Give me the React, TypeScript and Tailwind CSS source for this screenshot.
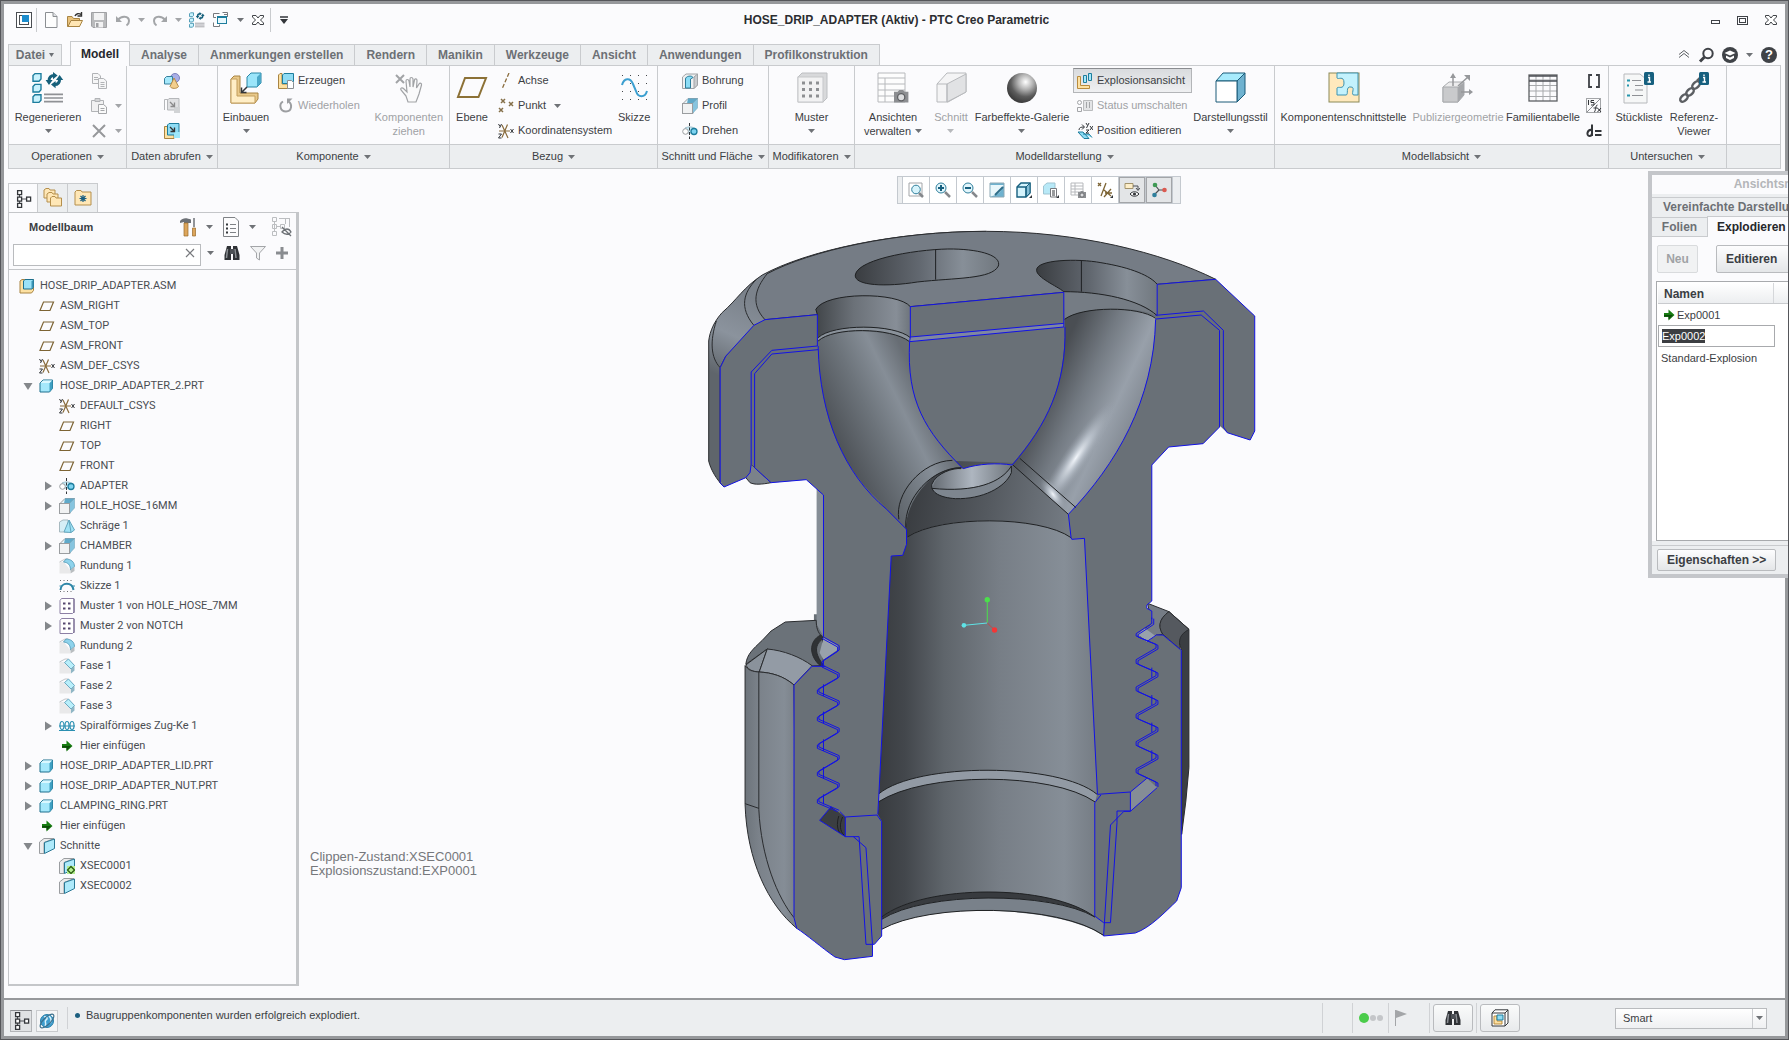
import React from 'react';

type IconProps = { children?: React.ReactNode; size?: number; box?: number };

const Svg = ({ children, size = 16, box = 16 }: IconProps) => (
  <svg
    width={size}
    height={size}
    viewBox={`0 0 ${box} ${box}`}
    fill="none"
    className="shrink-0"
    aria-hidden="true"
  >
    {children}
  </svg>
);

const Caret = ({ color = '#6f7276' }: { color?: string }) => (
  <svg width="7" height="4" viewBox="0 0 7 4" className="shrink-0" aria-hidden="true">
    <path d="M0 0H7L3.5 4Z" fill={color} />
  </svg>
);

/* ---------- small icons (16px) ---------- */

const AppIcon = () => (
  <Svg>
    <rect x="0.5" y="0.5" width="15" height="15" fill="#fff" stroke="#4a4d52" />
    <rect x="3.5" y="3.5" width="9" height="9" stroke="#4a4d52" />
    <rect x="6" y="3" width="7" height="7" fill="#1c8ccc" />
  </Svg>
);

const NewIcon = () => (
  <Svg>
    <path d="M2.5 0.5H10L14 4.5V15.5H2.5Z" fill="#fdfdfd" stroke="#8b8e92" />
    <path d="M10 0.5V4.5H14" stroke="#8b8e92" fill="#dfe1e4" />
  </Svg>
);

const OpenIcon = () => (
  <Svg>
    <path d="M0.5 14.5V4.5H5L6.5 6.5H12.5V14.5Z" fill="#e9c27c" stroke="#a88443" />
    <path d="M1 14.5L4 8.5H15.5L12.5 14.5Z" fill="#ffe6b4" stroke="#a88443" />
    <path d="M8 4C9 1.500 12 1 14 2.500M14.500 0V4H10.500" stroke="#333" strokeWidth="1.400" />
  </Svg>
);

const SaveIcon = () => (
  <Svg>
    <path d="M0.500 0.500H15.500V15.500H2L0.500 14Z" fill="#b9babc" stroke="#a0a1a4" />
    <rect x="3" y="1" width="10" height="7" fill="#f2f2f3" />
    <rect x="4" y="10" width="8" height="5.500" fill="#f2f2f3" />
    <rect x="5" y="11" width="2.500" height="4" fill="#a0a1a4" />
  </Svg>
);

const UndoIcon = ({ flip }: { flip?: boolean }) => (
  <Svg>
    <g transform={flip ? 'matrix(-1 0 0 1 16 0)' : undefined}>
      <path d="M3 8C6 3.500 14 3.500 14 9C14 11 13 12.500 11.500 13.500" stroke="#a3a5a8" strokeWidth="2" />
      <path d="M1 4V10H7Z" fill="#a3a5a8" />
    </g>
  </Svg>
);

const regenArt = (
  <>
    <g fill="#c9f2fd" stroke="#1d7d9d" strokeWidth="0.700">
      <path d="M0.500 1.800L1.500 0.800H4.500V3.500L3.500 4.600H0.500Z" />
      <path d="M0.500 7.200L1.500 6.200H4.500V8.900L3.500 10H0.500Z" />
      <path d="M0.500 12.400L1.500 11.400H4.500V14.100L3.500 15.200H0.500Z" />
    </g>
    <path d="M6 11.200H15.500M6 13H15.500M6 14.800H15.500" stroke="#8f9195" strokeWidth="0.800" />
    <path d="M8.500 4.500C8.500 2.500 9.500 1.800 11 1.800M13.800 3.500C13.800 5.500 12.800 6.300 11.300 6.300" stroke="#16607b" strokeWidth="1.500" />
    <path d="M6.800 4H10.300L8.500 6.500ZM12 4H15.600L13.800 1.500Z" fill="#16607b" />
    <path d="M10.500 0L12.800 1.800L10.500 3.600ZM11.800 4.500L9.500 6.300L11.800 8.100Z" fill="#16607b" />
  </>
);

const WindowsIcon = () => (
  <Svg>
    <g fill="#fff" stroke="#77797d">
      <path d="M0.500 1.500H6.500M0.500 1.500V5.500H3M9.500 0.500H14.500V5M11 2.500H14M0.500 10.500V14.500H6.500V12.500" />
    </g>
    <rect x="4.500" y="4.500" width="9" height="7" fill="#e8f8fd" stroke="#1d7d9d" />
    <path d="M4.500 5.500H13.500" stroke="#1d7d9d" />
  </Svg>
);

const XOutline = ({ size = 12 }: { size?: number }) => (
  <Svg size={size} box={12}>
    <path
      d="M0.500 1.500H4L6 4L8 1.500H11.500V3L8.500 6L11.500 9V10.500H8L6 8L4 10.500H0.500V9L3.500 6L0.500 3Z"
      fill="#fff"
      stroke="#3f4247"
    />
  </Svg>
);

const CopyIcon = () => (
  <Svg>
    <g fill="#f6f6f7" stroke="#b1b3b6">
      <path d="M1.500 0.500H7L9.500 3V10.500H1.500Z" />
      <path d="M7.500 5.500H12.500L15.500 8V15.500H7.500Z" />
      <path d="M3 4.500H7M3 6.500H7M9.500 9.500H13.500M9.500 11.500H13.500M9.500 13.500H13.500" />
    </g>
  </Svg>
);

const PasteIcon = () => (
  <Svg>
    <path d="M0.500 2.500H12.500V13.500H0.500Z" fill="#f1f1f2" stroke="#b1b3b6" />
    <path d="M4 0.500H9V3.500H4Z" fill="#d3d4d6" stroke="#b1b3b6" />
    <path d="M7.500 6.500H12.500L15.500 9V15.500H7.500ZM9.500 10.500H13.500M9.500 12.500H13.500" fill="#fafafa" stroke="#a4a6a9" />
  </Svg>
);

const DeleteIcon = () => (
  <Svg>
    <path d="M2 2L14 14M14 2L2 14" stroke="#96989b" strokeWidth="2" />
  </Svg>
);

const ShapesIcon = () => (
  <Svg>
    <circle cx="11" cy="5" r="4.500" fill="#a9aee6" stroke="#7d82bd" />
    <path d="M0.500 5.500L2.500 3.500H8.500V9L6.500 11H0.500Z" fill="#a5e8fb" stroke="#38809d" />
    <path d="M10 5L14.500 13.500C13 16 7.500 16 6 13.500Z" fill="#f3cf8e" stroke="#b38b49" />
  </Svg>
);

const CopyGeomIcon = ({ color }: { color?: boolean }) => (
  <Svg>
    {color ? (
      <path d="M0.500 3.500H4V11.500H10V15.500H0.500Z" fill="#fde1a2" stroke="#a88443" />
    ) : (
      <path d="M0.500 12V1.500H5" stroke="#b5b7ba" />
    )}
    <path d="M3.500 2L5 0.500H15V10L12 12H3.500Z" fill={color ? '#8fdcf4' : '#e0e1e3'} stroke={color ? '#1d7d9d' : '#b5b7ba'} />
    <rect x="10" y="9" width="6" height="6" fill={color ? '#9ee8fb' : '#d1d3d5'} />
    <path d="M6 4L10 8M10.500 4.500V8.500H6.500" stroke="#333" strokeOpacity={color ? 1 : 0.5} strokeWidth="1.300" />
  </Svg>
);

const CreateIcon = () => (
  <Svg>
    <path d="M0.500 2L2 0.500H4V11H12V14L10.500 15.500H0.500Z" fill="#fde1a2" stroke="#a88443" />
    <path d="M4.500 2L6 0.500H15.500V8.500L14 10.500H4.500Z" fill="#8fdcf4" stroke="#1d7d9d" />
    <path d="M9.500 7.500H13.500L15.500 9.500V15.500H9.500Z" fill="#fff" stroke="#8b8e92" />
  </Svg>
);

const RepeatIcon = () => (
  <Svg>
    <path d="M5 3.500C0.500 6 2 13.500 8 13.500C14 13.500 14.500 6 10.500 3.500" stroke="#9c9ea1" strokeWidth="2" />
    <path d="M9 0.500H14.500L9 6Z" fill="#9c9ea1" />
  </Svg>
);

const AxisIcon = () => (
  <Svg>
    <path d="M11 0L4 16" stroke="#8a6c3c" strokeWidth="1.300" strokeDasharray="4 2" />
  </Svg>
);

const PointIcon = () => (
  <Svg>
    <path d="M3 1L7 5M7 1L3 5M11 4L15 8M15 4L11 8M1 10L5 14M5 10L1 14" stroke="#85704a" strokeWidth="1.500" />
  </Svg>
);

const CsysIcon = () => (
  <Svg>
    <path d="M1 8H12M4 2L10 15M9.500 1.500L4 14.500" stroke="#8a6c3c" strokeWidth="1.200" />
    <path d="M0.500 1L2 3.500M3.500 1L1.500 5M0.500 11H3.500L0.500 15H3.500M12.500 6L15.500 10M15.500 6L12.500 10" stroke="#33363a" />
  </Svg>
);

const HoleIcon = () => (
  <Svg>
    <path d="M0.500 4L4 1H15.500V12L12 15.500H0.500Z" fill="#eff0f1" stroke="#a1a3a6" />
    <path d="M12 4L15.500 1V12L12 15.500Z" fill="#c9cbce" stroke="#a1a3a6" />
    <path d="M3.500 15V6C3.500 3 10 2 11 4.500L8.500 6V15Z" fill="#8bdcf5" stroke="#2c7c9a" />
  </Svg>
);

const ExtrudeIcon = () => (
  <Svg>
    <path d="M0.500 6L6 0.500H15.500L11 5.500V15.500H0.500Z" fill="#e7f3f8" stroke="#9a9da0" />
    <path d="M6 0.500H15.500L10.500 5.500H5Z" fill="#5fa9c9" />
    <path d="M15.500 0.500V10L10.500 15.500V5.500Z" fill="#86c4df" stroke="#6b9eb3" strokeWidth="0.500" />
    <rect x="0.500" y="5.500" width="10" height="10" fill="#f1f2f3" stroke="#9a9da0" />
  </Svg>
);

const RevolveIcon = () => (
  <Svg>
    <path d="M3 5C6 3.500 11 3.500 14 6V10H4Z" fill="#c9eefa" stroke="#9bbcc9" />
    <circle cx="3.500" cy="8.500" r="2.800" fill="#fff" stroke="#9a9da0" />
    <circle cx="12" cy="8.500" r="3" fill="#7ed4f1" stroke="#1d7d9d" strokeWidth="1.300" />
    <path d="M7.500 0V16" stroke="#33363a" strokeDasharray="3 1.500" />
  </Svg>
);

const PlaneIcon = () => (
  <Svg>
    <path d="M4.500 4H14.500L11 12.500H1Z" stroke="#7d6434" strokeWidth="1.200" />
  </Svg>
);

const AsmIcon = () => (
  <Svg>
    <path d="M1 3L3 1.500H14.500V12.500L12.500 15H1Z" fill="#fde1a2" stroke="#a88443" />
    <path d="M4.500 3L6 1.500H14.500V9L13 11H4.500Z" fill="#9be2f7" stroke="#1d6f8d" />
    <path d="M12.500 3.500L14.500 1.500V9L12.500 11Z" fill="#3a93b5" />
  </Svg>
);

const PartIcon = () => (
  <Svg>
    <path d="M1 5L4 2H13.500V10.500L10.500 14H1Z" fill="#a5e8fb" stroke="#1d6f8d" />
    <path d="M10.500 5L13.500 2V10.500L10.500 14Z" fill="#3f9fc2" />
    <path d="M1.500 5L4 2.500H13L10.500 5Z" fill="#d9f7ff" />
  </Svg>
);

const DraftIcon = () => (
  <Svg>
    <path d="M0.500 4L4 2H9V14H0.500Z" fill="#d5eef6" stroke="#a7b9c0" />
    <path d="M10 2L15.500 12L12 14.500L5 14Z" fill="#9fe2f5" stroke="#62a5bd" />
    <path d="M10 2L12 14.500" stroke="#62a5bd" />
  </Svg>
);

const RoundIcon = () => (
  <Svg>
    <path d="M0.500 4H5L11 12V15.500H0.500Z" fill="#e9e9ea" />
    <path d="M0.500 4L6 1H9" stroke="#c3c5c8" />
    <path d="M7 1C12 1 15.500 4 15.500 8.500L11.500 12C11.500 7 9 4.500 4.500 4Z" fill="#8ed3ec" stroke="#4e96b3" strokeWidth="0.800" />
    <path d="M11.500 12V15.500L15.500 13V8.500Z" fill="#b9bdc0" />
  </Svg>
);

const SketchSmallIcon = () => (
  <Svg>
    <path d="M1.500 12C2 4 13 3.500 14.500 12" stroke="#2f87a8" strokeWidth="2" />
    <path d="M1 2.500H15M1 13.500H15" stroke="#6b6d70" strokeDasharray="1 2.500" />
    <path d="M0.500 8H3M13 8H16" stroke="#2f87a8" />
  </Svg>
);

const PatternIcon = () => (
  <Svg>
    <path d="M1 2.500L2.500 0.500H15V14L13.500 15.500H1Z" fill="#fff" stroke="#8d80a5" />
    <path d="M15 1V15" stroke="#6d6089" />
    <path d="M4 5.500H6.500M9 5.500H11.500M4 10.500H6.500M9 10.500H11.500" stroke="#54476f" strokeWidth="2" />
  </Svg>
);

const ChamferIcon = () => (
  <Svg>
    <path d="M0.500 4H5L12 11V15.500H0.500Z" fill="#e9e9ea" />
    <path d="M0.500 4L6 1H9" stroke="#c3c5c8" />
    <path d="M9.500 1L15.500 7.500L12 11L5.500 4.500Z" fill="#b9effb" stroke="#4e96b3" strokeWidth="0.800" />
    <path d="M12 11V15.500L15.500 12.500V8Z" fill="#8fb6c5" />
  </Svg>
);

const HelixIcon = () => (
  <Svg>
    <g stroke="#2a8fb1" strokeWidth="1.200">
      <ellipse cx="3" cy="7.500" rx="2" ry="4" />
      <ellipse cx="8" cy="7.500" rx="2" ry="4" />
      <ellipse cx="13" cy="7.500" rx="2" ry="4" />
      <path d="M0 12.500H16M0 8H16" />
    </g>
  </Svg>
);

const InsertIcon = () => (
  <Svg>
    <path d="M3 6H7.500V2.500L13.500 8L7.500 13.500V10H3Z" fill="#177c11" />
    <path d="M3 8H12L7.500 12.500V9.500H3Z" fill="#0c4a08" />
  </Svg>
);

const SectionIcon = ({ active }: { active?: boolean }) => (
  <Svg>
    <path d="M0.500 4L5 0.500H15L5 4.500V15.500H0.500Z" fill="#ececed" stroke="#9a9da0" />
    <path d="M5.500 4.500L15.500 1V10.500L5.500 15.500Z" fill="#aeeafb" stroke="#2a7996" />
    {active && (
      <>
        <rect x="8" y="8" width="8" height="8" fill="#b5ee94" />
        <path d="M12 8.500L15.500 12L12 15.500L8.500 12Z" stroke="#2b5d12" strokeWidth="1.300" />
      </>
    )}
  </Svg>
);

const ExplodeIcon = () => (
  <Svg>
    <path d="M0.500 3.500H3.500V12.500H12.500V15.500H0.500Z" fill="#fde1a2" stroke="#b98b3d" />
    <path d="M6.500 2.500H9.500V9.500H6.500ZM11.500 0.500H14.500V7.500H11.500Z" fill="#a5e8fb" stroke="#1d7d9d" />
  </Svg>
);

const StatusIcon = () => (
  <Svg>
    <path d="M6.500 2.500H15.500V12.500H6.500Z" fill="#e3e4e6" stroke="#b9bbbd" />
    <circle cx="2.500" cy="4.500" r="2" stroke="#a3a5a8" />
    <path d="M0.500 9.500H4.500V13.500H0.500ZM9.500 4V10M12.500 4V10" stroke="#a3a5a8" />
  </Svg>
);

const PositionIcon = () => (
  <Svg>
    <path d="M1 9H6L12 15.500H7ZM6 11H12L15 14.500" fill="#8bdcf5" stroke="#1d7d9d" />
    <path d="M2 7C2 4.500 4 4 7 4M5 1.500L7.500 4L5 6.500M9 0L10.500 2.500M12 0L9.500 5M13 3L16 7M16 3L13 7M9 7H12L9 10H12" stroke="#33363a" />
  </Svg>
);

const Camera = ({ x = 8, y = 9 }: { x?: number; y?: number }) => (
  <g transform={`translate(${x} ${y})`}>
    <path d="M0 1H2L3 0H5L6 1H8V7H0Z" fill="#8c8e91" />
    <circle cx="4" cy="4" r="2" fill="#dcdddf" stroke="#5d5f62" strokeWidth="0.700" />
  </g>
);

const Binoculars = () => (
  <Svg>
    <path d="M3 1H7V15H0.500V10ZM9 1H13L15.500 10V15H9Z" fill="#2f3236" />
    <path d="M6 4H10V9H6Z" fill="#4c5055" />
    <path d="M3.500 4L2.500 13M11 4L12 13" stroke="#8a8e93" strokeWidth="1.500" />
  </Svg>
);

const TreeIcon = () => (
  <Svg size={18} box={18}>
    <path d="M3.500 4V14M3.500 9H13" stroke="#4c4f54" />
    <g fill="#fff" stroke="#33363a" strokeWidth="1.300">
      <rect x="1.600" y="0.600" width="4" height="4" />
      <rect x="1.600" y="7.100" width="4" height="4" />
      <rect x="1.600" y="13.400" width="4" height="4" />
      <rect x="10.600" y="7.100" width="4" height="4" />
    </g>
  </Svg>
);

const FolderIcon = ({ many }: { many?: boolean }) => (
  <Svg size={20} box={20}>
    {many ? (
      <g fill="#ffe7b6" stroke="#b58f4c">
        <path d="M1 10V2L3 0.500H6L7 2H12V10Z" />
        <path d="M4 14V6L6 4.500H9L10 6H15V14Z" />
        <path d="M7.500 18V10L9 8.500H12L13 10H18.500V18Z" />
      </g>
    ) : (
      <>
        <path d="M2 17V4L3.500 2.500H8L9 4H18V17Z" fill="#ffe7b6" stroke="#b58f4c" />
        <path d="M10 7V14M6.500 10.500H13.500M7.500 8L12.500 13M12.500 8L7.500 13" stroke="#1b5f82" strokeWidth="1.200" />
      </>
    )}
  </Svg>
);

/* ---------- large icons (32px) ---------- */

const AssembleBig = () => (
  <Svg size={32} box={32}>
    <path d="M1 7L4 4H10V21H28V27L25 31H1Z" fill="#e9c98a" stroke="#a88443" />
    <path d="M1 7H7V24H25V31H1Z" fill="#ffeec6" stroke="#c39e5d" />
    <path d="M17 5L21 1H31V11L27 15H17Z" fill="#9be5fa" stroke="#2a86a5" />
    <path d="M27 5L31 1V11L27 15Z" fill="#4ba8c8" />
    <path d="M17 15L12 20M11.500 15.500V20.500H16.500" stroke="#33363a" strokeWidth="1.500" />
  </Svg>
);

const DragBig = () => (
  <Svg size={32} box={32}>
    <path d="M3 3L11 11M11 3L3 11" stroke="#a1a3a6" strokeWidth="2" />
    <path
      d="M13 24L8 18C7 16 9 15 11 17L14 20L13 9C13 7 15.500 7 16 9L17 15V7C17 5 19.500 5 20 7V15L21.500 8C22 6 24 7 24 8.500L23.500 16L26 12C27 10.500 29 11.500 28.500 13L26 22L23 30H15Z"
      fill="#fafafb"
      stroke="#a1a3a6"
      strokeWidth="1.200"
    />
  </Svg>
);

const PlaneBig = () => (
  <Svg size={32} box={32}>
    <path d="M9 6H30L22.500 25H2Z" stroke="#8c7136" strokeWidth="2" />
  </Svg>
);

const SketchBig = () => (
  <Svg size={32} box={32}>
    <g stroke="#43464a" strokeDasharray="1 7">
      <path d="M4 3.500H31M4 11.500H31M4 19.500H31M4 27.500H31" />
    </g>
    <path d="M4 13C6 6 12 5 15 12L18 19C20 26 27 26 29 19" stroke="#3c9fd0" strokeWidth="2" />
  </Svg>
);

const PatternBig = () => (
  <Svg size={32} box={32}>
    <path d="M2 5L6 1H31V26L27 30H2Z" fill="#d8d9db" stroke="#bdbfc2" />
    <rect x="2" y="5" width="25" height="25" fill="#f2f2f3" stroke="#c5c7ca" />
    <path d="M6 11H9M13 11H16M20 11H23M6 17.500H9M13 17.500H16M20 17.500H23M6 24H9M13 24H16M20 24H23" stroke="#8d8f92" strokeWidth="3" />
  </Svg>
);

const ViewsBig = () => (
  <Svg size={32} box={32}>
    <path d="M1 1H28V30H1ZM1 6H28M1 12H28M1 18H28M1 24H28M8 6V30" fill="#fdfdfd" stroke="#b7b9bc" />
    <g transform="translate(17 18) scale(1.800)">
      <Camera x={0} y={0} />
    </g>
  </Svg>
);

const SectionBig = () => (
  <Svg size={32} box={32}>
    <path d="M2 12L12 1H31V20L13 30H2Z" fill="#f4f4f5" stroke="#b7b9bc" />
    <path d="M12 12L31 2V20L12 30Z" fill="#e1e2e4" stroke="#b7b9bc" />
    <path d="M2 12H12V30" stroke="#b7b9bc" />
  </Svg>
);

const SphereBig = () => (
  <Svg size={32} box={32}>
    <defs>
      <radialGradient id="sphere" cx="0.620" cy="0.300" r="0.700">
        <stop offset="0" stopColor="#fff" />
        <stop offset="0.350" stopColor="#b4b4b4" />
        <stop offset="0.700" stopColor="#5c5c5c" />
        <stop offset="1" stopColor="#3c3c3c" />
      </radialGradient>
    </defs>
    <circle cx="16" cy="16" r="15" fill="url(#sphere)" />
  </Svg>
);

const CubeBig = () => (
  <Svg size={32} box={32}>
    <path d="M1 9L8 1H30L22 9Z" fill="#a8ebfc" stroke="#1b5b78" />
    <path d="M22 9L30 1V22L22 30Z" fill="#6fb2d0" stroke="#1b5b78" />
    <path d="M1 9H22V30H1Z" fill="#fff" stroke="#1b5b78" />
  </Svg>
);

const PuzzleBig = () => (
  <Svg size={32} box={32}>
    <rect x="1" y="1" width="30" height="29" fill="#ffe9bd" stroke="#8b8a58" />
    <path
      d="M9 1H30V23H26C22 23 28 15 23 15C17 14 21 23 18 23H9V16C10 14 16 18 16 11C16 3 10 8 9 6Z"
      fill="#c3f2fd"
      stroke="#3f93b0"
    />
  </Svg>
);

const PublishBig = () => (
  <Svg size={32} box={32}>
    <path d="M1 15L7 10H22V23L16 30H1Z" fill="#ececed" stroke="#a8aaad" />
    <path d="M16 15L22 10V23L16 30Z" fill="#a5a7aa" />
    <path d="M1 15H16V30H1Z" fill="#c9cacc" stroke="#a8aaad" />
    <path d="M11 14V4M16 14L26 5M19 20H28" stroke="#96989b" strokeWidth="1.500" />
    <path d="M11 1L14 6H8ZM28 3V9L22 3ZM31 20L27 17V23Z" fill="#96989b" />
  </Svg>
);

const TableBig = () => (
  <Svg size={32} box={32}>
    <path d="M2 8H30M2 13.500H30M2 19H30M2 24.500H30M9 3V29M16 3V29M23 3V29" stroke="#a7a9ac" />
    <rect x="2" y="3" width="28" height="26" stroke="#5d6064" strokeWidth="1.300" />
    <path d="M2 4H30M2 9H30" stroke="#4c4f54" strokeWidth="1.500" />
  </Svg>
);

const Info = () => (
  <g>
    <rect x="21" y="0" width="10" height="13" rx="1.500" fill="#17607f" />
    <path d="M25 5.500H26.500V10M24.500 10H28M26 2.500V4" stroke="#fff" strokeWidth="1.400" />
  </g>
);

const BomBig = () => (
  <Svg size={32} box={32}>
    <path d="M1 2H17L24 8V31H1Z" fill="#f6f7f7" stroke="#b7b9bc" />
    <path d="M9 8.500H18M12 13.500H20M12 18H20M9 23.500H20" stroke="#8f9195" />
    <path d="M4 8.500H7M4 13.500H6M4 23.500H7" stroke="#2796ad" strokeWidth="2" />
    <Info />
  </Svg>
);

const RefBig = () => (
  <Svg size={32} box={32}>
    <g stroke="#5c5f63" strokeWidth="2.500">
      <ellipse cx="6" cy="26" rx="4.500" ry="2.800" transform="rotate(-45 6 26)" />
      <ellipse cx="12" cy="20" rx="4.500" ry="2.800" transform="rotate(-45 12 20)" />
      <ellipse cx="18" cy="13" rx="4.500" ry="2.800" transform="rotate(-45 18 13)" />
      <path d="M19 9L22 6" />
    </g>
    <Info />
  </Svg>
);

/* ---------- ribbon building blocks ---------- */

type GroupProps = { label?: string; width: string; children?: React.ReactNode };

const Group = ({ label, width, children }: GroupProps) => (
  <section className={`${width} flex flex-col border-l border-[#c9cbce]`}>
    <div className="flex h-[78px] items-start">{children}</div>
    <div className="flex h-6 items-center justify-center border-t border-[#c9cbce] bg-[#eceef0]">
      {label && (
        <button type="button" className="flex items-center gap-[5px] whitespace-nowrap">
          {label}
          <Caret />
        </button>
      )}
    </div>
  </section>
);

type BigProps = {
  icon: React.ReactNode;
  lines: string[];
  width: string;
  arrow?: boolean;
  disabled?: boolean;
};

const BigButton = ({ icon, lines, width, arrow, disabled }: BigProps) => (
  <button
    type="button"
    disabled={disabled}
    className={`${width} flex shrink-0 flex-col items-center pt-1.5 disabled:text-[#a0a2a5]`}
  >
    {icon}
    <span className="mt-1.5 flex flex-col items-center leading-[14px] whitespace-nowrap">
      {lines.map((line, i) => (
        <span key={line} className="flex items-center gap-1">
          {line}
          {arrow && lines.length > 1 && i === lines.length - 1 && <Caret />}
        </span>
      ))}
      {arrow && lines.length === 1 && (
        <span className="flex h-[14px] items-center">
          <Caret color={disabled ? '#b7b9bc' : undefined} />
        </span>
      )}
    </span>
  </button>
);

type SmallProps = {
  icon: React.ReactNode;
  label?: string;
  name?: string;
  arrow?: boolean;
  disabled?: boolean;
  pressed?: boolean;
};

const SmallButton = ({ icon, label, name, arrow, disabled, pressed }: SmallProps) => (
  <button
    type="button"
    disabled={disabled}
    aria-label={name}
    aria-pressed={pressed}
    className={`flex h-[25px] items-center gap-1 border px-[3px] whitespace-nowrap disabled:text-[#a0a2a5] ${
      pressed
        ? 'border-[#b3b5b8] border-t-[#8a8c90] bg-gradient-to-b from-[#d9dbde] to-[#eff0f2]'
        : 'border-transparent'
    }`}
  >
    {icon}
    {label}
    {arrow && (
      <span className="ml-1">
        <Caret color={disabled ? '#a3a5a8' : undefined} />
      </span>
    )}
  </button>
);

const Stack = ({ children }: { children: React.ReactNode }) => (
  <div className="flex flex-col items-stretch pt-0.5">{children}</div>
);

const Ribbon = () => (
  <div className="mx-1 flex border border-l-0 border-[#c9cbce] text-[11px] text-[#3b3e43]">
    <Group label="Operationen" width="w-[118px]">
      <BigButton
        icon={<Svg size={32}>{regenArt}</Svg>}
        lines={['Regenerieren']}
        width="w-[78px]"
        arrow
      />
      <Stack>
        <SmallButton icon={<CopyIcon />} name="Kopieren" disabled />
        <SmallButton icon={<PasteIcon />} name="Einfügen" arrow disabled />
        <SmallButton icon={<DeleteIcon />} name="Löschen" arrow disabled />
      </Stack>
    </Group>
    <Group label="Daten abrufen" width="w-[91px]">
      <div className="mx-auto">
        <Stack>
          <SmallButton icon={<ShapesIcon />} name="Benutzerdefiniertes KE" />
          <SmallButton icon={<CopyGeomIcon />} name="Geometrie kopieren" disabled />
          <SmallButton icon={<CopyGeomIcon color />} name="Schrumpfverpackung" />
        </Stack>
      </div>
    </Group>
    <Group label="Komponente" width="w-[232px]">
      <BigButton icon={<AssembleBig />} lines={['Einbauen']} width="w-[56px]" arrow />
      <Stack>
        <SmallButton icon={<CreateIcon />} label="Erzeugen" />
        <SmallButton icon={<RepeatIcon />} label="Wiederholen" disabled />
      </Stack>
      <div className="mt-2 ml-1 h-14 w-px bg-[#e0e2e4]" />
      <BigButton icon={<DragBig />} lines={['Komponenten', 'ziehen']} width="w-[82px]" disabled />
    </Group>
    <Group label="Bezug" width="w-[208px]">
      <BigButton icon={<PlaneBig />} lines={['Ebene']} width="w-[44px]" />
      <Stack>
        <SmallButton icon={<AxisIcon />} label="Achse" />
        <SmallButton icon={<PointIcon />} label="Punkt" arrow />
        <SmallButton icon={<CsysIcon />} label="Koordinatensystem" />
      </Stack>
      <BigButton icon={<SketchBig />} lines={['Skizze']} width="w-9" />
    </Group>
    <Group label="Schnitt und Fläche" width="w-[111px]">
      <div className="ml-5">
        <Stack>
          <SmallButton icon={<HoleIcon />} label="Bohrung" />
          <SmallButton icon={<ExtrudeIcon />} label="Profil" />
          <SmallButton icon={<RevolveIcon />} label="Drehen" />
        </Stack>
      </div>
    </Group>
    <Group label="Modifikatoren" width="w-[86px]">
      <BigButton icon={<PatternBig />} lines={['Muster']} width="w-full" arrow />
    </Group>
    <Group label="Modelldarstellung" width="w-[420px]">
      <BigButton icon={<ViewsBig />} lines={['Ansichten', 'verwalten']} width="w-[76px]" arrow />
      <BigButton icon={<SectionBig />} lines={['Schnitt']} width="w-10" arrow disabled />
      <BigButton icon={<SphereBig />} lines={['Farbeffekte-Galerie']} width="w-[102px]" arrow />
      <Stack>
        <SmallButton icon={<ExplodeIcon />} label="Explosionsansicht" pressed />
        <SmallButton icon={<StatusIcon />} label="Status umschalten" disabled />
        <SmallButton icon={<PositionIcon />} label="Position editieren" />
      </Stack>
      <BigButton icon={<CubeBig />} lines={['Darstellungsstil']} width="w-[78px]" arrow />
    </Group>
    <Group label="Modellabsicht" width="w-[334px]">
      <BigButton icon={<PuzzleBig />} lines={['Komponentenschnittstelle']} width="w-[137px]" />
      <BigButton icon={<PublishBig />} lines={['Publiziergeometrie']} width="w-[92px]" disabled />
      <BigButton icon={<TableBig />} lines={['Familientabelle']} width="w-[78px]" />
      <Stack>
        <SmallButton
          name="Parameter"
          icon={
            <Svg>
              <path d="M6 2H3V14H6M10 2H13V14H10" stroke="#3f4247" strokeWidth="1.800" />
            </Svg>
          }
        />
        <SmallButton
          name="Beziehungen umschalten"
          icon={
            <Svg>
              <path d="M0.500 0.500H14.500L0.500 14.500Z" fill="#fafafb" />
              <rect x="0.500" y="0.500" width="14" height="14" stroke="#a3a5a8" />
              <path d="M14 1L1 14" stroke="#8b8e92" />
              <path d="M2.500 2V7M5 2.500H8M5 2.500V4.500H8V7H5M8 14C10 14 9 7 11.500 7M7.500 10H11.500M11.500 10L15 14M15 10L11.500 14" stroke="#33363a" />
            </Svg>
          }
        />
        <SmallButton
          name="Beziehungen"
          icon={
            <Svg>
              <path d="M6 1.500V13M6 7C1 6 0 13 3.500 13C5 13 6 11.500 6 10M9 8H15.500M9 12H15.500" stroke="#33363a" strokeWidth="2" />
            </Svg>
          }
        />
      </Stack>
    </Group>
    <Group label="Untersuchen" width="w-[118px]">
      <BigButton icon={<BomBig />} lines={['Stückliste']} width="w-[60px]" />
      <BigButton icon={<RefBig />} lines={['Referenz-', 'Viewer']} width="w-[50px]" />
    </Group>
    <Group width="flex-1" />
  </div>
);

/* ---------- title bar and tabs ---------- */

const IconButton = ({ name, children }: { name: string; children: React.ReactNode }) => (
  <button type="button" aria-label={name} className="flex items-center justify-center">
    {children}
  </button>
);

const TitleBar = () => (
  <header className="grid h-[37px] grid-cols-[1fr_auto_1fr] items-center pr-2 pb-1.5 pl-3">
    <div className="flex items-center">
      <AppIcon />
      <div className="mx-1 h-6 w-px bg-[#c9cbce]" />
      <div className="ml-0.5 flex items-center gap-2">
        <IconButton name="Neu"><NewIcon /></IconButton>
        <IconButton name="Öffnen"><OpenIcon /></IconButton>
        <IconButton name="Speichern"><SaveIcon /></IconButton>
        <IconButton name="Rückgängig"><UndoIcon /></IconButton>
        <span className="-mx-px"><Caret color="#a3a5a8" /></span>
        <IconButton name="Wiederherstellen"><UndoIcon flip /></IconButton>
        <span className="-mx-px"><Caret color="#a3a5a8" /></span>
        <IconButton name="Regenerieren"><Svg>{regenArt}</Svg></IconButton>
        <IconButton name="Fenster"><WindowsIcon /></IconButton>
        <Caret />
        <IconButton name="Fenster schließen"><XOutline /></IconButton>
      </div>
      <div className="mr-2 ml-1.5 h-6 w-px bg-[#c9cbce]" />
      <IconButton name="Symbolleiste anpassen">
        <Svg size={10} box={10}>
          <path d="M1 2H9" stroke="#33363a" strokeWidth="1.500" />
          <path d="M1 4H9L5 9Z" fill="#33363a" />
        </Svg>
      </IconButton>
    </div>
    <h1 className="text-[12px] font-bold text-[#2b2d31]">
      HOSE_DRIP_ADAPTER (Aktiv) - PTC Creo Parametric
    </h1>
    <div className="flex items-center justify-end gap-4">
      <IconButton name="Minimieren">
        <Svg size={10} box={10}>
          <rect x="0.500" y="5.500" width="8" height="3" stroke="#3f4247" />
        </Svg>
      </IconButton>
      <IconButton name="Maximieren">
        <Svg size={12} box={12}>
          <rect x="0.500" y="2.500" width="10" height="8" stroke="#3f4247" />
          <rect x="2.500" y="4.500" width="6" height="4" stroke="#3f4247" />
        </Svg>
      </IconButton>
      <IconButton name="Schließen"><XOutline /></IconButton>
    </div>
  </header>
);

const tabs = [
  'Analyse',
  'Anmerkungen erstellen',
  'Rendern',
  'Manikin',
  'Werkzeuge',
  'Ansicht',
  'Anwendungen',
  'Profilkonstruktion',
];

const TabRow = () => (
  <nav className="flex h-6 items-end px-1 text-[12px] font-bold text-[#6c7075]">
    <button type="button" className="flex h-[21px] w-[54px] items-center justify-center gap-1 border border-b-0 border-[#c9cbce] bg-[#eceef0]">
      Datei
      <svg width="5" height="4" viewBox="0 0 5 4" aria-hidden="true">
        <path d="M0 0H5L2.500 4Z" fill="#6c7075" />
      </svg>
    </button>
    <button type="button" className="relative -mb-px ml-2 h-[25px] border border-b-0 border-[#c9cbce] bg-[#fbfbfd] px-[10px] text-[#26282c]">
      Modell
    </button>
    {tabs.map((tab) => (
      <button key={tab} type="button" className="h-[21px] border-t border-r border-[#c9cbce] bg-[#eceef0] px-[11px]">
        {tab}
      </button>
    ))}
    <div className="ml-auto flex h-full items-center gap-2 pt-1 pr-1">
      <IconButton name="Multifunktionsleiste minimieren">
        <Svg size={12} box={12}>
          <path d="M1 5.500L6 1.500L11 5.500M1 8.500L6 4.500L11 8.500" stroke="#5d6064" />
        </Svg>
      </IconButton>
      <IconButton name="Suchen">
        <Svg>
          <circle cx="10" cy="6.500" r="4.700" stroke="#3f4247" strokeWidth="2" />
          <path d="M6.500 10L2 14.500" stroke="#3f4247" strokeWidth="3" />
        </Svg>
      </IconButton>
      <IconButton name="Lernen">
        <Svg>
          <circle cx="8" cy="8" r="8" fill="#3f4247" />
          <path d="M2.500 6L8 3.500L13.500 6L8 8.500ZM4 8.500L8 10.500L12 8.500V11L8 13L4 11Z" fill="#fff" />
        </Svg>
      </IconButton>
      <Caret />
      <IconButton name="Hilfe">
        <span className="flex size-4 items-center justify-center rounded-full bg-[#3f4247] text-[13px] leading-4 text-white">
          ?
        </span>
      </IconButton>
    </div>
  </nav>
);

/* ---------- model tree ---------- */

type Node = {
  level: number;
  icon: React.ReactNode;
  name: string;
  state?: 'open' | 'closed';
};

const nodes: Node[] = [
  { level: 0, icon: <AsmIcon />, name: 'HOSE_DRIP_ADAPTER.ASM' },
  { level: 1, icon: <PlaneIcon />, name: 'ASM_RIGHT' },
  { level: 1, icon: <PlaneIcon />, name: 'ASM_TOP' },
  { level: 1, icon: <PlaneIcon />, name: 'ASM_FRONT' },
  { level: 1, icon: <CsysIcon />, name: 'ASM_DEF_CSYS' },
  { level: 1, icon: <PartIcon />, name: 'HOSE_DRIP_ADAPTER_2.PRT', state: 'open' },
  { level: 2, icon: <CsysIcon />, name: 'DEFAULT_CSYS' },
  { level: 2, icon: <PlaneIcon />, name: 'RIGHT' },
  { level: 2, icon: <PlaneIcon />, name: 'TOP' },
  { level: 2, icon: <PlaneIcon />, name: 'FRONT' },
  { level: 2, icon: <RevolveIcon />, name: 'ADAPTER', state: 'closed' },
  { level: 2, icon: <ExtrudeIcon />, name: 'HOLE_HOSE_16MM', state: 'closed' },
  { level: 2, icon: <DraftIcon />, name: 'Schräge 1' },
  { level: 2, icon: <ExtrudeIcon />, name: 'CHAMBER', state: 'closed' },
  { level: 2, icon: <RoundIcon />, name: 'Rundung 1' },
  { level: 2, icon: <SketchSmallIcon />, name: 'Skizze 1' },
  { level: 2, icon: <PatternIcon />, name: 'Muster 1 von HOLE_HOSE_7MM', state: 'closed' },
  { level: 2, icon: <PatternIcon />, name: 'Muster 2 von NOTCH', state: 'closed' },
  { level: 2, icon: <RoundIcon />, name: 'Rundung 2' },
  { level: 2, icon: <ChamferIcon />, name: 'Fase 1' },
  { level: 2, icon: <ChamferIcon />, name: 'Fase 2' },
  { level: 2, icon: <ChamferIcon />, name: 'Fase 3' },
  { level: 2, icon: <HelixIcon />, name: 'Spiralförmiges Zug-Ke 1', state: 'closed' },
  { level: 2, icon: <InsertIcon />, name: 'Hier einfügen' },
  { level: 1, icon: <PartIcon />, name: 'HOSE_DRIP_ADAPTER_LID.PRT', state: 'closed' },
  { level: 1, icon: <PartIcon />, name: 'HOSE_DRIP_ADAPTER_NUT.PRT', state: 'closed' },
  { level: 1, icon: <PartIcon />, name: 'CLAMPING_RING.PRT', state: 'closed' },
  { level: 1, icon: <InsertIcon />, name: 'Hier einfügen' },
  { level: 1, icon: <SectionIcon />, name: 'Schnitte', state: 'open' },
  { level: 2, icon: <SectionIcon active />, name: 'XSEC0001' },
  { level: 2, icon: <SectionIcon />, name: 'XSEC0002' },
];

const indents = ['pl-[10px]', 'pl-[13px]', 'pl-[33px]'];

const TreeRow = ({ level, icon, name, state }: Node) => (
  <li className={`flex h-5 items-center ${indents[level]}`}>
    {level > 0 && (
      <span className="mr-[5px] flex w-3 justify-center">
        {state && (
          <button type="button" aria-label={state === 'open' ? 'Einklappen' : 'Ausklappen'}>
            <Svg size={10} box={10}>
              <path d={state === 'open' ? 'M0.500 2H9.500L5 9Z' : 'M2 0.500L9 5L2 9.500Z'} fill="#84878b" />
            </Svg>
          </button>
        )}
      </span>
    )}
    {icon}
    <span className="ml-[5px] whitespace-nowrap">{name}</span>
  </li>
);

const ModelTree = () => (
  <aside className="ml-1 flex w-[291px] shrink-0 flex-col pt-[14px] pb-3">
    <div className="flex h-[29px]">
      <button type="button" aria-label="Modellbaum" className="-mb-px flex w-[30px] items-center justify-center border border-b-0 border-[#c9cbce] bg-[#fbfbfd] pl-1">
        <TreeIcon />
      </button>
      <button type="button" aria-label="Ordner-Browser" className="flex w-[30px] items-center justify-center border-t border-r border-[#c9cbce] bg-[#eceef0]">
        <FolderIcon many />
      </button>
      <button type="button" aria-label="Favoriten" className="flex w-[30px] items-center justify-center border-t border-r border-[#c9cbce] bg-[#eceef0]">
        <FolderIcon />
      </button>
    </div>
    <div className="flex min-h-0 flex-1 flex-col border border-r-3 border-b-2 border-[#c4c6c9]">
      <div className="flex h-7 items-center pr-1 pl-5">
        <h2 className="text-[11px] font-bold text-[#3b3e43]">Modellbaum</h2>
        <div className="ml-auto flex items-center gap-2">
          <IconButton name="Einstellungen">
            <Svg size={20} box={20}>
              <path d="M2 4C5 0 9 1 13 2.500V6H10V7H6V5L2 6Z" fill="#6d7176" />
              <path d="M6 6H10V19H6Z" fill="#dca55b" stroke="#9a6a2a" strokeWidth="0.700" />
              <path d="M16 1V10" stroke="#6d7176" strokeWidth="1.500" />
              <path d="M14.500 11H17.500V19H14.500Z" fill="#dca55b" stroke="#9a6a2a" strokeWidth="0.700" />
            </Svg>
          </IconButton>
          <Caret />
          <IconButton name="Anzeigen">
            <Svg size={20} box={20}>
              <path d="M2.500 0.500H14L17.500 4V19.500H2.500Z" fill="#fcfcfd" stroke="#7f8286" />
              <path d="M9 7.500H15M9 11.500H15M9 15.500H15" stroke="#7f8286" />
              <path d="M5 7.500H7M5 11.500H7M5 15.500H7" stroke="#33363a" strokeWidth="2" />
            </Svg>
          </IconButton>
          <Caret />
          <span className="w-0" />
          <IconButton name="Baumspalten">
            <Svg size={20} box={20}>
              <g stroke="#bcbec1">
                <path d="M0.500 0.500H4.500V4.500H0.500ZM0.500 7.500H4.500V11.500H0.500ZM0.500 14.500H4.500V18.500H0.500ZM8.500 7.500H12.500V11.500H8.500ZM7 1.500H18M4.500 9.500H8.500M2.500 4.500V14.500M17.500 2V10M13.500 2V7" />
              </g>
              <path d="M10 15C13 11 17 11 19 15C17 18 13 18 10 15ZM10 10L19 19" stroke="#6d7176" strokeWidth="1.300" />
            </Svg>
          </IconButton>
        </div>
      </div>
      <div className="flex h-[29px] items-start border-b border-[#c4c6c9] pt-px pl-1">
        <div className="relative w-[188px]">
          <input type="text" aria-label="Modellbaum durchsuchen" className="h-[22px] w-full border border-[#b9bbbe] bg-white px-1 text-[11px]" />
          <button type="button" aria-label="Suche löschen" className="absolute top-1.5 right-1.5">
            <Svg size={10} box={10}>
              <path d="M1 1L9 9M9 1L1 9" stroke="#77797d" strokeWidth="1.200" />
            </Svg>
          </button>
        </div>
        <div className="flex h-[22px] items-center gap-[10px] pl-1.5">
          <Caret />
          <IconButton name="Suchen"><Binoculars /></IconButton>
          <IconButton name="Filter">
            <Svg>
              <path d="M0.500 1.500H15.500L9.500 8V15L6.500 13V8Z" fill="#f1f2f3" stroke="#a3a5a8" />
            </Svg>
          </IconButton>
          <IconButton name="Hinzufügen">
            <Svg size={12} box={12}>
              <path d="M6 0V12M0 6H12" stroke="#898c90" strokeWidth="3" />
            </Svg>
          </IconButton>
        </div>
      </div>
      <ul className="pt-1.5 font-['Roboto','Liberation_Sans',sans-serif] text-[11px] text-[#4a4d52]">
        {nodes.map((node, i) => (
          <TreeRow key={i} {...node} />
        ))}
      </ul>
    </div>
  </aside>
);

/* ---------- graphics area ---------- */

const viewIcons: { name: string; art: React.ReactNode; pressed?: boolean }[] = [
  {
    name: 'Neu einpassen',
    art: (
      <>
        <path d="M1 1H14V14H1Z" stroke="#a3a5a8" />
        <circle cx="8" cy="7.500" r="4.300" fill="#d6f3fb" stroke="#2f7f9c" />
        <path d="M11 11L15 15" stroke="#85888c" strokeWidth="2.500" />
      </>
    ),
  },
  {
    name: 'Vergrößern',
    art: (
      <>
        <circle cx="6" cy="6" r="5" fill="#e2f6fc" stroke="#2f7f9c" />
        <path d="M6 3V9M3 6H9" stroke="#17607f" strokeWidth="2" />
        <path d="M10 10L15 15" stroke="#85888c" strokeWidth="2.500" />
      </>
    ),
  },
  {
    name: 'Verkleinern',
    art: (
      <>
        <circle cx="6" cy="6" r="5" fill="#e2f6fc" stroke="#2f7f9c" />
        <path d="M3 6H9" stroke="#17607f" strokeWidth="2" />
        <path d="M10 10L15 15" stroke="#85888c" strokeWidth="2.500" />
      </>
    ),
  },
  {
    name: 'Neu zeichnen',
    art: (
      <>
        <path d="M1 1H15V15H1Z" fill="#6fb2cf" stroke="#8fa9b5" />
        <path d="M1.500 3H14.500C13 9 9 13 1.500 14.500Z" fill="#e9f7fb" />
        <path d="M14 5L6 13" stroke="#2d6d88" strokeWidth="2" />
      </>
    ),
  },
  {
    name: 'Darstellungsstil',
    art: (
      <>
        <path d="M1 5L5 1H14V11L10 15H1Z" fill="#d4f3fc" stroke="#17607f" strokeWidth="1.400" />
        <path d="M10 5L14 1V11L10 15Z" fill="#84bed6" stroke="#17607f" />
        <path d="M1 5H10V15" stroke="#17607f" strokeWidth="1.400" />
        <path d="M16 13V16H13Z" fill="#33363a" />
      </>
    ),
  },
  {
    name: 'Gespeicherte Orientierungen',
    art: (
      <>
        <path d="M0.500 4L4 1H12V9L9 12H0.500Z" fill="#b8e9f7" stroke="#9fc5d3" />
        <path d="M7.500 6.500H13.500V15H7.500Z" fill="#fff" stroke="#77797d" />
        <path d="M9 9H12M9 11H12M9 13H12" stroke="#33363a" />
        <path d="M16 13V16H13Z" fill="#33363a" />
      </>
    ),
  },
  {
    name: 'Ansichtsmanager',
    art: (
      <>
        <path d="M1 1H13V13H1ZM1 4H13M1 7H13M1 10H13M5 1V13" stroke="#b7b9bc" />
        <Camera />
      </>
    ),
  },
  {
    name: 'Bezugsanzeigefilter',
    art: (
      <>
        <path d="M1 1L4 4M4 1L1 4M9 1L4 14M7 8L14 14M14 7L7 15M8 11H15" stroke="#7d6434" strokeWidth="1.300" />
        <path d="M16 13V16H13Z" fill="#33363a" />
      </>
    ),
  },
  {
    name: 'Anmerkungsanzeige',
    pressed: true,
    art: (
      <>
        <path d="M1 1.500H9V6.500H1Z" fill="#fdeec9" stroke="#a3936b" />
        <path d="M9 4H14V8M12 6L14 8.500L16 6" stroke="#4c4f54" />
        <path d="M6 12C8.500 9 12.500 9 15 12C12.500 15 8.500 15 6 12Z" fill="#fff" stroke="#33363a" />
        <circle cx="10.500" cy="12" r="1.600" fill="#33363a" />
      </>
    ),
  },
  {
    name: 'Drehmitte',
    pressed: true,
    art: (
      <>
        <path d="M4 3L8 8L14 8M8 8L3 13" stroke="#4c4f54" strokeWidth="1.200" />
        <circle cx="4" cy="3" r="2.300" fill="#3f9a55" />
        <circle cx="13.500" cy="8" r="2.300" fill="#db5a50" />
        <circle cx="3.500" cy="13" r="2.300" fill="#2f7f9c" />
      </>
    ),
  },
];

const ViewToolbar = () => (
  <div className="flex h-7 border border-[#c4c9cf] bg-white">
    <div className="w-1 bg-[#eceef0]" />
    {viewIcons.map(({ name, art, pressed }) => (
      <button
        key={name}
        type="button"
        aria-label={name}
        aria-pressed={pressed}
        className={`flex w-[27px] items-center justify-center border-l border-[#c4c9cf] ${
          pressed ? 'bg-[#e3e5e7] ring-1 ring-[#a3a5a8] ring-inset' : ''
        }`}
      >
        <Svg>{art}</Svg>
      </button>
    ))}
    <div className="w-2 border-l border-[#c4c9cf] bg-[#eceef0]" />
  </div>
);

const rightThread =
  'M1233 1340V1357L1192 1388V1395L1244 1420V1431L1192 1466V1477L1244 1503V1514L1192 1548V1559L1244 1586V1597L1192 1630V1641L1244 1667V1678L1192 1712V1723L1244 1750V1761L1192 1794V1805L1244 1833V1845';
const leftThread =
  'M375 1398L416 1424V1437L375 1468V1484L416 1507V1518L363 1553V1563L416 1590V1600L363 1635V1645L416 1672V1682L363 1718V1728L416 1754V1764L363 1800V1810L416 1837V1847L363 1882V1892L416 1918';

// The part is drawn on a grid that is finer than the screen: 1568 x 2400 units on 600 x 800 pixels.
const Model = () => (
  <svg
    className="absolute top-0.5 left-[381px] h-[800px] w-[600px]"
    viewBox="0 0 1568 2400"
    preserveAspectRatio="none"
    fill="none"
    role="img"
    aria-label="Schnittansicht HOSE_DRIP_ADAPTER"
  >
    <defs>
      <linearGradient id="bore" x1="520" x2="1090" y1="0" y2="0" gradientUnits="userSpaceOnUse">
        <stop offset="0" stopColor="#393c40" />
        <stop offset="0.120" stopColor="#43474c" />
        <stop offset="0.300" stopColor="#5f656b" />
        <stop offset="0.550" stopColor="#777e86" />
        <stop offset="0.850" stopColor="#868e97" />
        <stop offset="1" stopColor="#757c84" />
      </linearGradient>
      <linearGradient id="dome" x1="590" x2="1020" y1="1000" y2="1060" gradientUnits="userSpaceOnUse">
        <stop offset="0" stopColor="#393c40" />
        <stop offset="0.500" stopColor="#555a60" />
        <stop offset="1" stopColor="#757c84" />
      </linearGradient>
      <linearGradient id="port" x1="658" x2="868" y1="0" y2="0" gradientUnits="userSpaceOnUse">
        <stop offset="0" stopColor="#646a71" />
        <stop offset="0.500" stopColor="#aeb6c0" />
        <stop offset="1" stopColor="#6e757c" />
      </linearGradient>
      <linearGradient id="tubeL" x1="370" x2="630" y1="760" y2="650" gradientUnits="userSpaceOnUse">
        <stop offset="0" stopColor="#4a4e53" />
        <stop offset="0.450" stopColor="#6c737a" />
        <stop offset="0.750" stopColor="#868e97" />
        <stop offset="1" stopColor="#676d74" />
      </linearGradient>
      <linearGradient id="tubeR" x1="960" x2="1210" y1="640" y2="740" gradientUnits="userSpaceOnUse">
        <stop offset="0" stopColor="#4a4e53" />
        <stop offset="0.350" stopColor="#737a82" />
        <stop offset="0.700" stopColor="#98a0aa" />
        <stop offset="1" stopColor="#7e858e" />
      </linearGradient>
      <linearGradient id="counter" x1="0" x2="1" y1="0" y2="0">
        <stop offset="0" stopColor="#42464a" />
        <stop offset="0.400" stopColor="#6b7178" />
        <stop offset="0.850" stopColor="#878e97" />
        <stop offset="1" stopColor="#6e757c" />
      </linearGradient>
      <linearGradient id="slot" x1="0" x2="1" y1="0" y2="0">
        <stop offset="0" stopColor="#3a3d41" />
        <stop offset="0.450" stopColor="#626870" />
        <stop offset="0.750" stopColor="#878f98" />
        <stop offset="1" stopColor="#71787f" />
      </linearGradient>
      <linearGradient id="lidSide" x1="75" x2="190" y1="600" y2="380" gradientUnits="userSpaceOnUse">
        <stop offset="0" stopColor="#5f656b" />
        <stop offset="0.500" stopColor="#8b939d" />
        <stop offset="1" stopColor="#7b828b" />
      </linearGradient>
      <linearGradient id="nutSide" x1="170" x2="298" y1="0" y2="0" gradientUnits="userSpaceOnUse">
        <stop offset="0" stopColor="#6d747b" />
        <stop offset="0.280" stopColor="#7b828a" />
        <stop offset="0.800" stopColor="#858d96" />
        <stop offset="1" stopColor="#7b828a" />
      </linearGradient>
      <radialGradient id="shine">
        <stop offset="0" stopColor="#f2f6fb" />
        <stop offset="0.400" stopColor="#c4ccd6" stopOpacity="0.700" />
        <stop offset="1" stopColor="#98a0aa" stopOpacity="0" />
      </radialGradient>
      <clipPath id="tubeRClip">
        <path d="M1005 440C1050 405 1200 405 1243 440C1238 690 1140 880 1015 1030L868 880C960 760 1012 640 1005 440Z" />
      </clipPath>
    </defs>

    {/* hidden sides of lid and nut */}
    <path fill="#697077" d="M350 1330H420V1530H350Z" />
    <g stroke="#2a2c2f" strokeWidth="1">
      <path vectorEffect="non-scaling-stroke" fill="url(#lidSide)" d="M75 510C78 480 90 450 110 425C150 385 165 350 215 312C330 240 560 181 800 181L222 446L120 555L105 590V935L115 948C95 925 80 895 75 870Z" />
      <path vectorEffect="non-scaling-stroke" fill="#757c85" d="M222 446C185 400 195 355 228 308C340 240 560 181 800 181C1040 181 1260 245 1400 325L1247 340L1003 364L602 407L359 431Z" />
      <path vectorEffect="non-scaling-stroke" d="M193 463C155 410 165 365 200 325M105 590C80 560 78 510 95 450" />
      <path vectorEffect="non-scaling-stroke" fill="#7b828a" d="M172 920L186 880L238 935C215 940 195 942 183 935Z" />
      <path fill="#858d96" stroke="none" d="M357 950L376 970V1398L357 1360Z" />
      <path vectorEffect="non-scaling-stroke" fill="#6b7279" d="M172 1480C175 1450 190 1435 215 1408L238 1380L275 1353L356 1348C356 1370 360 1385 372 1398L375 1484H345L228 1434Z" />
      <path vectorEffect="non-scaling-stroke" fill="#2f3235" d="M368 1392C335 1410 335 1460 375 1492L405 1520C350 1460 345 1425 375 1402Z" />
      <path vectorEffect="non-scaling-stroke" fill="#8a929b" d="M228 1434L172 1482C180 1500 195 1502 207 1503Z" />
      <path vectorEffect="non-scaling-stroke" fill="#939ba5" d="M228 1434C270 1438 315 1458 345 1484L298 1542C270 1515 240 1505 207 1503Z" />
      <path vectorEffect="non-scaling-stroke" fill="url(#nutSide)" d="M170 1484V1900C175 2070 230 2200 305 2272L298 1542C270 1515 240 1505 207 1503C190 1502 178 1498 170 1484Z" />
      <path vectorEffect="non-scaling-stroke" d="M206 1503V1915C212 2060 255 2180 298 2240M170 1898L206 1912" />
      <path vectorEffect="non-scaling-stroke" fill="#3b3e42" d="M1278 1322L1330 1375V1790L1322 1890L1311 1990V1438Z" />
      <path vectorEffect="non-scaling-stroke" fill="#757c85" d="M1222 1297L1278 1322C1250 1345 1250 1370 1262 1390L1245 1392L1220 1410L1195 1390L1233 1357Z" />
      <path vectorEffect="non-scaling-stroke" fill="#55595f" d="M1278 1322L1330 1375C1305 1392 1303 1405 1307 1435L1262 1390C1250 1370 1250 1345 1278 1322Z" />
    </g>

    {/* cut face */}
    <path
      fill="#697077"
      d="M105 590L120 555L193 463L222 446L359 431L602 407L1003 364L1247 340L1400 325L1502 435V780L1490 807L1430 785L1412 766L1367 818L1277 828L1233 882V1290L1220 1302V1312L1233 1320V1357L1195 1390L1220 1412L1245 1392H1262L1310 1438V2150L1298 2190C1270 2220 1230 2270 1190 2286L1107 2295C1000 2205 640 2190 527 2275V2295L508 2320H503V2356L430 2366L405 2358C370 2330 330 2290 305 2272L298 2240V1542L345 1484L380 1486L405 1515L416 1507V1490L375 1484V1468L416 1437V1424L375 1398V972L330 926L238 935L186 880L183 905L172 920L115 948L105 930Z"
    />

    {/* bore */}
    <path fill="url(#dome)" d="M590 1075C590 1000 640 920 720 870L868 875L1015 1030L1022 1100C940 1032 680 1032 594 1098Z" />
    <path fill="url(#bore)" d="M552 1155L582 1153L592 1120L594 1098C680 1033 940 1033 1022 1100L1024 1105L1057 1102L1090 1870C980 1774 620 1774 520 1870Z" />
    <path fill="url(#bore)" d="M520 1890C640 1802 970 1802 1085 1893V2240C970 2138 640 2138 527 2238V1950L517 1930Z" />
    <path fill="#929aa4" d="M520 1868C620 1774 990 1774 1090 1870L1085 1893C970 1802 640 1802 518 1893Z" />
    <path fill="#383b3f" d="M527 2238C640 2138 970 2138 1084 2238C970 2161 640 2161 527 2245Z" />
    <path fill="#79818a" d="M527 2245C640 2161 970 2161 1084 2238L1107 2255V2293C990 2198 650 2195 527 2275Z" />

    {/* port between the tubes */}
    <path fill="#7e868f" d="M658 940C670 905 715 890 740 893C780 878 830 875 868 882L866 905C850 950 790 985 720 983C680 980 655 965 658 940Z" />
    <path fill="url(#port)" d="M660 950C670 905 715 890 740 893C780 878 830 875 868 882C840 935 770 965 660 950Z" />

    {/* tubes and slots */}
    <path fill="url(#tubeL)" d="M361 500C440 470 540 475 600 512C592 690 640 780 735 888C660 890 585 980 590 1075L520 990C400 860 362 690 361 500Z" />
    <path fill="url(#tubeR)" d="M1005 440C1050 405 1200 405 1243 440C1238 690 1140 880 1015 1030L868 880C960 760 1012 640 1005 440Z" />
    <g clipPath="url(#tubeRClip)">
      <ellipse cx="1035" cy="860" rx="34" ry="200" transform="rotate(30 1035 860)" fill="url(#shine)" />
      <ellipse cx="975" cy="970" rx="22" ry="55" transform="rotate(-30 975 970)" fill="url(#shine)" />
    </g>
    <path fill="url(#counter)" d="M355 415C380 362 570 362 602 407V500C560 460 400 455 361 500L359 431Z" />
    <path fill="#8a929b" d="M361 500C400 458 560 458 602 500L600 512C550 468 400 468 361 510Z" />
    <path fill="url(#slot)" d="M458 312C465 260 640 232 715 234C790 236 840 255 832 285C815 325 720 320 620 333C540 348 455 345 458 312Z" />
    <path fill="url(#slot)" d="M932 298C930 265 1040 262 1100 275C1180 290 1230 315 1247 340V432C1200 385 1100 362 1003 362C985 345 932 320 932 298Z" />
    <path fill="#757c84" d="M1003 362C1100 362 1200 385 1245 434C1200 405 1050 405 1005 445Z" />
    <path fill="#858d96" d="M1177 1863L1220 1822L1247 1850L1177 1920Z" />
    <path fill="#3b3e42" d="M395 1907L365 1948L432 1997V1938Z" />
    <path fill="#98a1ab" d="M375 1400L412 1424V1436L375 1466L365 1445ZM1195 1390L1215 1372L1243 1395L1220 1410Z" />

    {/* black edges */}
    <g stroke="#1f2123" strokeWidth="1">
      <path vectorEffect="non-scaling-stroke" d="M458 312C465 260 640 232 715 234C790 236 840 255 832 285C815 325 720 320 620 333C540 348 455 345 458 312ZM668 236V326" />
      <path vectorEffect="non-scaling-stroke" d="M1003 362C985 345 932 320 932 298C930 265 1040 262 1100 275C1180 290 1230 315 1247 340M1049 268V362M1003 362C1100 362 1200 385 1247 434M1005 445C1050 405 1200 405 1243 442" />
      <path vectorEffect="non-scaling-stroke" d="M359 431L355 415C380 362 570 362 602 407M361 500C400 458 560 458 602 500M361 510C400 468 550 468 600 512" />
      <path vectorEffect="non-scaling-stroke" d="M572 1045C560 970 630 870 712 868M590 1070C585 980 660 890 735 890M868 880L1015 1030M888 862L1035 1010" />
      <path vectorEffect="non-scaling-stroke" d="M735 893C715 890 670 905 658 940C655 965 680 980 720 983C790 985 850 950 866 905V885M658 952C770 965 840 935 866 885" />
      <path vectorEffect="non-scaling-stroke" d="M594 1098C680 1033 940 1033 1022 1100M520 1868C620 1774 990 1774 1090 1870M518 1893C640 1802 970 1802 1085 1893" />
      <path vectorEffect="non-scaling-stroke" d="M527 2238C640 2138 970 2138 1084 2238M527 2245C640 2161 970 2161 1084 2238M527 2275C650 2195 990 2198 1107 2293" />
      <path vectorEffect="non-scaling-stroke" d="M415 1935C408 1960 412 1980 420 1988M425 1938C416 1960 418 1980 428 1992" />
    </g>

    {/* section edges */}
    <g stroke="#1212e6" strokeWidth="1">
      <path vectorEffect="non-scaling-stroke" d="M359 525V431L222 446L193 463L120 555L105 590V935L115 948L172 920L183 905L186 880V603L240 538L359 525" />
      <path vectorEffect="non-scaling-stroke" d="M361 536L240 549L195 608V890L238 935L330 926L375 972V1398" />
      <path vectorEffect="non-scaling-stroke" d="M361 525C365 740 430 910 540 1015L592 1075V1120L582 1153L552 1155L517 1930" />
      <path vectorEffect="non-scaling-stroke" fill="#7f87a0" d="M602 498L1003 457V468L600 512Z" />
      <path vectorEffect="non-scaling-stroke" d="M602 498V407L1003 364V457M600 512C592 690 640 780 740 893C780 878 830 875 868 882C960 760 1010 640 1006 468" />
      <path vectorEffect="non-scaling-stroke" d="M1247 432V340L1400 325L1502 435V780L1490 807L1430 785L1420 768V478L1368 420L1243 433M1243 444L1362 432L1410 478V768L1367 818L1277 828L1233 882V1290L1220 1302V1312L1233 1320V1345" />
      <path vectorEffect="non-scaling-stroke" d="M1243 445C1238 690 1140 880 1015 1030L1022 1100L1024 1105L1057 1102L1091 1870L1177 1863L1220 1822" />
      <path vectorEffect="non-scaling-stroke" d={rightThread} />
      <path vectorEffect="non-scaling-stroke" d={rightThread} transform="translate(5 3)" />
      <path vectorEffect="non-scaling-stroke" d={leftThread} />
      <path vectorEffect="non-scaling-stroke" d={leftThread} transform="translate(-4 4)" />
      <path vectorEffect="non-scaling-stroke" d="M1233 1490V1520M1233 1572V1602M1233 1655V1684M1233 1738V1768M375 1540V1575M375 1622V1656M375 1705V1740M375 1788V1822M375 1870V1900" />
      <path vectorEffect="non-scaling-stroke" d="M1220 1412L1245 1392H1262L1310 1438V2150L1298 2190C1270 2220 1230 2270 1190 2286L1107 2295L1125 1962L1160 1921H1177L1247 1850M1177 1863V1920" />
      <path vectorEffect="non-scaling-stroke" d="M1177 1920H1142V1955L1125 2255H1107L1084 2235V1895L1100 1872" />
      <path vectorEffect="non-scaling-stroke" d="M380 1486H345L298 1542V2240L305 2272C330 2290 370 2330 405 2358L430 2366L503 2356V2320L486 2030L453 1997" />
      <path vectorEffect="non-scaling-stroke" d="M418 1922L432 1938L515 1932L527 1952V2295L508 2320H486L468 1997H432L365 1948L395 1907M432 1938V1997" />
    </g>

    {/* spin center */}
    <path vectorEffect="non-scaling-stroke" d="M803 1355V1287" stroke="#4be04b" />
    <path vectorEffect="non-scaling-stroke" d="M803 1356L742 1363" stroke="#5fe3e6" />
    <path vectorEffect="non-scaling-stroke" d="M803 1356L822 1377" stroke="#c54545" />
    <ellipse cx="803" cy="1286" rx="7" ry="8" fill="#4be04b" />
    <ellipse cx="742" cy="1363" rx="6" ry="7" fill="#5fe3e6" />
    <ellipse cx="822" cy="1377" rx="7" ry="8" fill="#f33636" />
  </svg>
);

const Viewport = () => (
  <main className="relative flex-1">
    <Model />
    <div className="relative flex justify-center pt-[7px] pr-1.5">
      <ViewToolbar />
    </div>
    <p className="absolute top-[681px] left-[11px] text-[13px] leading-[14px] text-[#75777b]">
      Clippen-Zustand:XSEC0001
      <br />
      Explosionszustand:EXP0001
    </p>
  </main>
);

/* ---------- view manager ---------- */

const dialogButton =
  'rounded-[2px] border border-[#b9bbbe] bg-gradient-to-b from-[#fdfdfe] to-[#e4e6e8] font-bold';

const ViewManager = () => (
  <div
    role="dialog"
    aria-label="Ansichtsmanager"
    className="absolute top-[170px] -right-[124px] flex h-[407px] w-[264px] flex-col border-4 border-[#c4c6ca] bg-[#eceef0] text-[12px] text-[#3b3e43]"
  >
    <div className="h-[19px] bg-[#fbfbfd] pl-2 text-center leading-[18px] font-bold text-[#b4b6b9]">
      Ansichtsmanager
    </div>
    <div className="mt-[3px] h-[19px] border-t border-[#c9cbce] pl-[11px] leading-[19px] font-bold text-[#6c7075]">
      Vereinfachte Darstellung
    </div>
    <div className="flex h-[21px] items-end font-bold">
      <button type="button" className="h-5 w-[55px] border-t border-b border-[#c9cbce] text-[#6c7075]">
        Folien
      </button>
      <button type="button" className="h-[21px] border border-b-0 border-[#c9cbce] bg-[#fbfbfd] px-[9px] text-[#26282c]">
        Explodieren
      </button>
      <span className="flex-1 border-b border-[#c9cbce]" />
    </div>
    <div className="flex min-h-0 flex-1 flex-col bg-[#fbfbfd] pt-2 pl-1">
      <div className="flex gap-[18px] pl-px">
        <button type="button" disabled className="h-7 w-[41px] rounded-[2px] border border-[#d9dbdd] bg-[#f1f2f3] font-bold text-[#a0a2a5]">
          Neu
        </button>
        <button type="button" className={`${dialogButton} flex h-7 items-center gap-3 px-[9px]`}>
          Editieren
          <Caret />
        </button>
      </div>
      <div className="mt-2 flex-1 border border-[#a8aaad] bg-white">
        <div className="m-px flex h-[21px] items-center border-b border-[#c9cbce] bg-gradient-to-b from-white to-[#eceef0]">
          <span className="h-full w-[116px] border-r border-[#d5d7da] pl-1.5 leading-[22px] font-bold">Namen</span>
        </div>
        <div className="text-[11px]">
          <div className="flex h-5 items-center pl-1">
            <InsertIcon />
            Exp0001
          </div>
          <div className="ml-px flex h-[22px] w-[117px] items-center border border-[#a8aaad] bg-white pl-[3px]">
            <input
              type="text"
              aria-label="Name"
              defaultValue="Exp0002"
              className="h-[14px] w-[43px] bg-[#3c3e42] text-white outline-none"
            />
          </div>
          <div className="h-[22px] pl-1 leading-[22px]">Standard-Explosion</div>
        </div>
      </div>
    </div>
    <div className="mt-1 flex h-[29px] items-center border-t border-[#c9cbce] pl-[5px]">
      <button type="button" className={`${dialogButton} h-[22px] px-[9px]`}>
        Eigenschaften &gt;&gt;
      </button>
    </div>
  </div>
);

/* ---------- status bar ---------- */

const Divider = () => <div className="h-[30px] w-px bg-[#d0d2d5]" />;

const StatusBar = () => (
  <footer className="flex h-[38px] shrink-0 items-center border-t-2 border-[#96989b] bg-[#eceef0] text-[11px] text-[#3b3e43]">
    <div className="flex items-center gap-1 pt-1.5 pl-1.5">
      <button type="button" aria-label="Navigator" className="flex size-[22px] items-center justify-center border border-[#b3b5b8] border-t-[#8a8c90] bg-[#e0e2e4] pl-1">
        <TreeIcon />
      </button>
      <button type="button" aria-label="Webbrowser" className="flex size-[22px] items-center justify-center border border-[#c9cbce] bg-[#f4f5f6]">
        <Svg>
          <circle cx="8" cy="8" r="6.500" fill="#3f9fd0" stroke="#2a7fa8" />
          <path d="M5 4C8 3 9 6 7 7C5 8 8 11 6 13M10 3C12 5 13 8 11 10" stroke="#d9f1fa" strokeWidth="1.500" />
          <ellipse cx="8" cy="8" rx="9" ry="3.500" transform="rotate(-45 8 8)" stroke="#3c6f8c" strokeWidth="1.200" />
        </Svg>
      </button>
    </div>
    <div className="ml-[9px] h-[22px] w-px bg-[#d0d2d5]" />
    <p className="flex items-center gap-1.5 pb-1.5 pl-[7px]">
      <span className="size-[5px] rounded-full bg-[#1c5f80]" />
      Baugruppenkomponenten wurden erfolgreich explodiert.
    </p>
    <div className="ml-auto flex items-center pr-[18px]">
      <Divider />
      <div className="w-[29px]" />
      <Divider />
      <div className="flex w-[35px] items-center justify-center gap-px">
        <span className="size-[10px] rounded-full bg-[#4bcc4b]" />
        <span className="size-[6px] rounded-full bg-[#c4c6c9]" />
        <span className="size-[6px] rounded-full bg-[#c4c6c9]" />
      </div>
      <Divider />
      <div className="w-10 pl-1.5">
        <Svg>
          <path d="M0.500 0V16" stroke="#a3a5a8" />
          <path d="M1 0L12 4L1 8Z" fill="#a3a5a8" />
        </Svg>
      </div>
      <Divider />
      <button type="button" aria-label="Suchen" className="mx-[3px] flex h-7 w-10 items-center justify-center rounded-[3px] border border-[#b9bbbe] bg-gradient-to-b from-[#fafbfb] to-[#e8eaec]">
        <Binoculars />
      </button>
      <Divider />
      <button type="button" aria-label="Auswahl" className="mx-[3px] flex h-7 w-10 items-center justify-center rounded-[3px] border border-[#b9bbbe] bg-gradient-to-b from-[#fafbfb] to-[#e8eaec]">
        <Svg size={18} box={18}>
          <path d="M1 4L4 0.800H17V14L14 17H1ZM1 4H14V17M14 4L17 1" fill="#fff" stroke="#33363a" />
          <path d="M3 7H6V12H11V15H3Z" fill="#fde1a2" stroke="#b98b3d" />
          <path d="M6 6H12V11H6Z" fill="#8fdcf4" stroke="#1d7d9d" />
        </Svg>
      </button>
      <div className="relative ml-[92px] w-[152px]">
        <select aria-label="Auswahlfilter" className="h-[21px] w-full appearance-none border border-[#b9bbbe] bg-gradient-to-b from-white to-[#eff0f2] pl-[7px] text-[11px]">
          <option>Smart</option>
        </select>
        <span className="pointer-events-none absolute top-px right-px bottom-px flex w-[14px] items-center justify-center border-l border-[#c9cbce]">
          <Caret />
        </span>
      </div>
    </div>
  </footer>
);

const App = () => {
  return (
    <div className="relative h-screen overflow-hidden border border-[#55565a] bg-[#96989b] p-[3px] font-['Liberation_Sans',Arial,sans-serif]">
      <div className="flex h-full flex-col bg-[#fbfbfd]">
        <TitleBar />
        <TabRow />
        <Ribbon />
        <div className="flex min-h-0 flex-1">
          <ModelTree />
          <Viewport />
        </div>
        <StatusBar />
      </div>
      <ViewManager />
      {/* edge of the window behind */}
      <div className="absolute -top-px left-[839px] flex h-px w-60 bg-[#e4e5e7]">
        <span className="ml-24 w-12 bg-[#4fae85]" />
      </div>
    </div>
  );
};

export default App;
